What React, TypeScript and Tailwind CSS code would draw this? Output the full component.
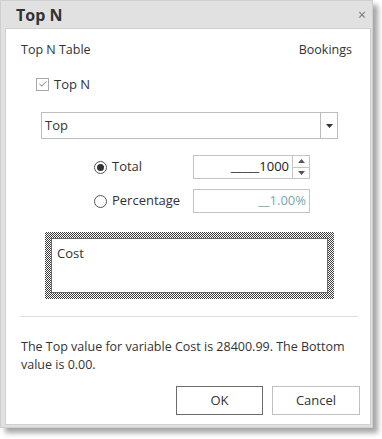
import { Check } from 'lucide-react';

export default function App() {
  return (
    <div className="min-h-screen bg-white" style={{ fontFamily: '"Open Sans", "Noto Sans", sans-serif' }}>
      <div className="w-[373px] h-[428px] bg-[#e1e1e1] border border-[#cfcfcf] flex flex-col shadow-[5px_5px_5px_rgba(0,0,0,0.35)] text-[#333]">
        {/* title bar */}
        <div className="h-[27px] flex items-center justify-between pl-[15px] pr-[6px]">
          <span className="text-[16px] font-bold text-[#333] leading-none">Top N</span>
          <span className="text-[#777] text-[14px] leading-none">×</span>
        </div>

        {/* body */}
        <div className="flex-1 ml-[4px] mr-[1px] mb-[2px] bg-white border border-[#d0d0d0] flex flex-col pl-[15px] pr-[18px] text-[12.5px]">
          <div className="flex justify-between mt-[13px] leading-[16px]">
            <span>Top N Table</span>
            <span>Bookings</span>
          </div>

          <div className="flex items-center mt-[18px] ml-[15px] leading-[16px]">
            <span className="w-[13px] h-[13px] border border-[#a8a8a8] flex items-center justify-center">
              <Check className="w-[10px] h-[10px] text-[#999]" strokeWidth={2.5} />
            </span>
            <span className="ml-[5px] text-[13px]">Top N</span>
          </div>

          <div className="flex mt-[20px] ml-[20px] w-[297px] h-[27px] border border-[#bdbdbd]">
            <div className="flex-1 flex items-center pl-[3px] text-[13px]">Top</div>
            <div className="w-[17px] border-l border-[#bdbdbd] flex items-center justify-center">
              <svg width="7" height="4" viewBox="0 0 7 4"><path d="M0 0h7L3.5 4z" fill="#333" /></svg>
            </div>
          </div>

          <div className="flex items-center mt-[16px] ml-[73px]">
            <span className="w-[13px] h-[13px] rounded-full border border-[#555] flex items-center justify-center">
              <span className="w-[7px] h-[7px] rounded-full bg-[#333]" />
            </span>
            <span className="ml-[5px] w-[81px] text-[13px]">Total</span>
            <div className="flex w-[117px] h-[24px] border border-[#c4c4c4]">
              <div className="flex-1 flex items-center justify-end pr-[3px] text-[13px] text-[#222]">_____1000</div>
              <div className="w-[17px] border-l border-[#c4c4c4] flex flex-col">
                <div className="flex-1 flex items-center justify-center border-b border-[#c4c4c4]">
                  <svg width="7" height="4" viewBox="0 0 7 4"><path d="M0 4h7L3.5 0z" fill="#555" /></svg>
                </div>
                <div className="flex-1 flex items-center justify-center">
                  <svg width="7" height="4" viewBox="0 0 7 4"><path d="M0 0h7L3.5 4z" fill="#555" /></svg>
                </div>
              </div>
            </div>
          </div>

          <div className="flex items-center mt-[10px] ml-[73px]">
            <span className="w-[13px] h-[13px] rounded-full border border-[#555]" />
            <span className="ml-[5px] w-[81px] text-[13px]">Percentage</span>
            <div className="flex items-center justify-end w-[117px] h-[24px] border border-[#c4c4c4] pr-[3px] text-[13px] text-[#7aa6ad]">
              __1.00%
            </div>
          </div>

          <div className="mt-[19px] ml-[24px] w-[289px] h-[67px] p-[6px] bg-[repeating-conic-gradient(#3a3a3a_0_25%,#ffffff_0_50%)] bg-[length:2px_2px]">
            <div className="w-full h-full bg-white border border-[#6a6a6a] px-[5px] pt-[6px] text-[13px] leading-[16px]">Cost</div>
          </div>

          <div className="mt-[17px] -ml-[1px] mr-[-6px] h-px bg-[#dedede]" />

          <p className="mt-[21px] leading-[18px]">
            The Top value for variable Cost is 28400.99. The Bottom value is 0.00.
          </p>

          <div className="flex justify-end gap-[9px] mt-[12px] mr-[-8px]">
            <button className="w-[87px] h-[29px] border border-[#6b6b6b] bg-white text-[13px]">OK</button>
            <button className="w-[88px] h-[29px] border border-[#c0c0c0] bg-white text-[13px]">Cancel</button>
          </div>
        </div>
      </div>
    </div>
  );
}
